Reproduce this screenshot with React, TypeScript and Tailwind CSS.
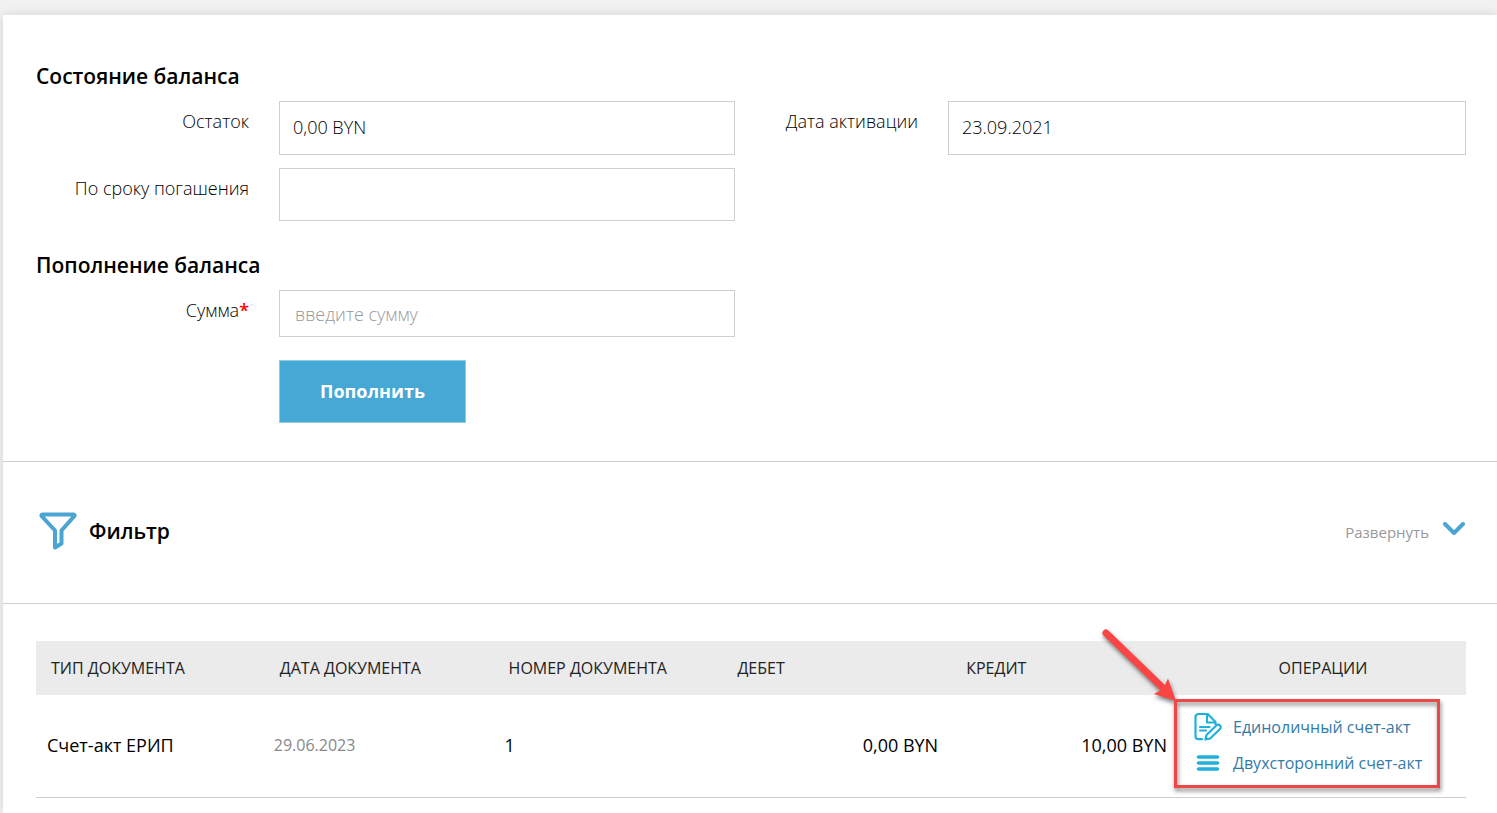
import React from 'react';

const columns = ['Тип документа', 'Дата документа', 'Номер документа', 'Дебет', 'Кредит'];

const documents = [
  { type: 'Счет-акт ЕРИП', date: '29.06.2023', number: '1', debit: '0,00 BYN', credit: '10,00 BYN' },
];

const labelClass = 'pt-2 text-right text-lg leading-6 font-light';
const headingClass = 'text-[21px] leading-7 font-semibold text-black';
const gridClass = 'grid grid-cols-[213fr_456fr_153fr_518fr] gap-x-[30px]';

const FilterIcon: React.FC = () => (
  <svg width="38" height="38" viewBox="0 0 38 38" fill="none" stroke="#4ba5d2" strokeWidth="4" strokeLinejoin="round" aria-hidden="true">
    <path d="M3.500 2.500h31a1 1 0 0 1 .8 1.700L22.500 18.500V31.500l-6.500 4V18.500L2.700 4.200a1 1 0 0 1 .8-1.700z" />
  </svg>
);

const ChevronIcon: React.FC = () => (
  <svg width="22" height="14" viewBox="0 0 22 14" fill="none" stroke="#4ba5d2" strokeWidth="4" strokeLinecap="round" strokeLinejoin="round" aria-hidden="true">
    <path d="M2 2L11 11l9-9" />
  </svg>
);

const SignIcon: React.FC = () => (
  <svg width="28" height="28" viewBox="0 0 28 28" fill="none" stroke="#20b0dc" strokeWidth="2.200" strokeLinecap="round" strokeLinejoin="round" aria-hidden="true">
    <path d="M8 26.200H4.500a3 3 0 0 1-3-3V4a3 3 0 0 1 3-3h9.300l7.700 8v2" />
    <path d="M13 1.500V9.500h8" />
    <path d="M6 14h9.500M6 17.500h6" />
    <path d="M11.500 26.500l1-4.500 9.800-9.500a2.500 2.500 0 0 1 3.700 3.500L16.200 25.500z" />
  </svg>
);

const ListIcon: React.FC = () => (
  <svg width="28" height="28" viewBox="0 0 28 28" stroke="#20b0dc" strokeWidth="3.600" strokeLinecap="round" aria-hidden="true">
    <path d="M4.500 8h19M4.500 14h19M4.500 20h19" />
  </svg>
);

const Callout: React.FC = () => (
  <div className="pointer-events-none absolute -top-2.5 -left-1.5 h-[89px] w-[266px] border-3 border-[#ee4747] drop-shadow-[1px_3px_2px_rgba(0,0,0,0.5)]">
    <svg className="absolute -top-[74px] -left-[76px]" width="78" height="76" viewBox="0 0 78 76" aria-hidden="true">
      <path d="M5 5L62 60" stroke="#fb4545" strokeWidth="7" strokeLinecap="round" />
      <path d="M75 73L67 50.500L63.500 58L60 62L53 66z" fill="#fb4545" />
    </svg>
  </div>
);

const BalanceForm: React.FC = () => (
  <form className="border-b border-[#cfcfcf] pt-[47px] pr-[31px] pb-[38px] pl-[33px]">
    <h2 className={headingClass}>Состояние баланса</h2>
    <div className={`${gridClass} mt-[11px] gap-y-[13px]`}>
      <label htmlFor="rest" className={labelClass}>Остаток</label>
      <input id="rest" readOnly defaultValue="0,00 BYN" className="h-[54px] w-full border border-[#cfcfcf] px-[13px] pb-0.5 text-lg font-light" />
      <label htmlFor="activation" className={`${labelClass} whitespace-nowrap`}>Дата активации</label>
      <input id="activation" readOnly defaultValue="23.09.2021" className="h-[54px] w-full border border-[#cfcfcf] px-[13px] pb-0.5 text-lg font-light" />
      <label htmlFor="term" className={labelClass}>По сроку погашения</label>
      <input id="term" readOnly className="h-[53px] w-full border border-[#cfcfcf] px-[13px] text-lg font-light" />
    </div>

    <h2 className={`${headingClass} mt-[30px]`}>Пополнение баланса</h2>
    <div className={`${gridClass} mt-[11px] gap-y-[23px]`}>
      <label htmlFor="amount" className={labelClass}>
        Сумма<span className="font-semibold text-[#f00]">*</span>
      </label>
      <input id="amount" placeholder="введите сумму" className="h-[47px] w-full border border-[#cfcfcf] px-[15px] text-lg font-light placeholder:text-[#999]" />
      <button type="button" className="col-start-2 h-[63px] w-[187px] border border-[#8fcbe6] bg-[#45a8d5] pb-0.5 text-lg font-bold text-white">
        Пополнить
      </button>
    </div>
  </form>
);

const FilterBar: React.FC = () => (
  <section className="flex h-[142px] items-center justify-between border-b border-[#cfcfcf] pr-8 pb-1 pl-9">
    <div className="flex items-center gap-3">
      <FilterIcon />
      <h2 className={headingClass}>Фильтр</h2>
    </div>
    <button type="button" className="flex items-start gap-3.5 text-[15px] leading-6 text-[#999]">
      <span className="pt-0.5">Развернуть</span>
      <span className="pt-1">
        <ChevronIcon />
      </span>
    </button>
  </section>
);

const DocumentsTable: React.FC = () => (
  <div className="pt-[37px] pr-[31px] pl-[33px]">
    <table className="w-full table-fixed">
      <thead>
        <tr className="h-[54px] bg-[#ebebeb] text-base text-[#222] uppercase">
          {columns.map((column) => (
            <th key={column} className="w-[16%] pl-[15px] text-left font-medium">{column}</th>
          ))}
          <th className="w-[20%] text-center font-medium">Операции</th>
        </tr>
      </thead>
      <tbody>
        {documents.map((doc) => (
          <tr key={doc.number} className="h-[102px] border-b border-[#cfcfcf] text-lg text-black">
            <td className="pb-0.5 pl-[11px]">{doc.type}</td>
            <td className="pb-0.5 pl-[9px] text-base text-[#888]">{doc.date}</td>
            <td className="pb-0.5 pl-[11px]">{doc.number}</td>
            <td className="pr-[13px] pb-0.5 text-right">{doc.debit}</td>
            <td className="pr-[13px] pb-0.5 text-right">{doc.credit}</td>
            <td className="pb-0.5">
              <div className="relative flex flex-col pl-3.5 text-base leading-9 whitespace-nowrap text-[#337ba7]">
                <a href="#single" className="flex items-center gap-[11px]">
                  <SignIcon />
                  Единоличный счет-акт
                </a>
                <a href="#double" className="flex items-center gap-[11px]">
                  <ListIcon />
                  Двухсторонний счет-акт
                </a>
                <Callout />
              </div>
            </td>
          </tr>
        ))}
      </tbody>
    </table>
  </div>
);

export default function App() {
  return (
    <div className="min-h-screen bg-[#f1f1f1] pt-[15px] pl-[3px] font-['Open_Sans',sans-serif] text-black">
      <main className="min-h-[calc(100vh-15px)] bg-white shadow-[0_0_10px_rgba(0,0,0,0.12)]">
        <BalanceForm />
        <FilterBar />
        <DocumentsTable />
      </main>
    </div>
  );
}
